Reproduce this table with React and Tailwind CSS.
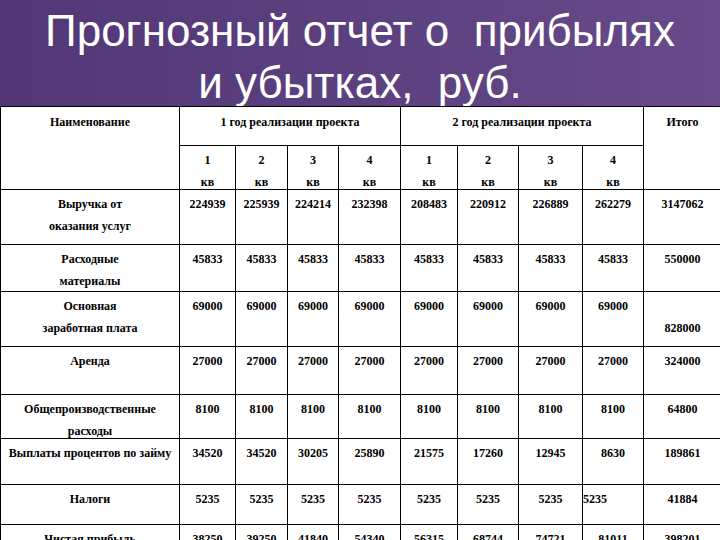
import React from "react";

const rows = [
  { label: ["Выручка от", "оказания услуг"], vals: ["224939", "225939", "224214", "232398", "208483", "220912", "226889", "262279"], total: "3147062", h: "h-[55px]" },
  { label: ["Расходные", "материалы"], vals: ["45833", "45833", "45833", "45833", "45833", "45833", "45833", "45833"], total: "550000", h: "h-[47px]" },
  { label: ["Основная", "заработная плата"], vals: ["69000", "69000", "69000", "69000", "69000", "69000", "69000", "69000"], total: "828000", totalLow: true, h: "h-[55px]" },
  { label: ["Аренда"], vals: ["27000", "27000", "27000", "27000", "27000", "27000", "27000", "27000"], total: "324000", h: "h-[48px]" },
  { label: ["Общепроизводственные", "расходы"], vals: ["8100", "8100", "8100", "8100", "8100", "8100", "8100", "8100"], total: "64800", h: "h-[44px]" },
  { label: ["Выплаты процентов по займу"], vals: ["34520", "34520", "30205", "25890", "21575", "17260", "12945", "8630"], total: "189861", h: "h-[46px]" },
  { label: ["Налоги"], vals: ["5235", "5235", "5235", "5235", "5235", "5235", "5235", "5235"], total: "41884", leftLast: true, h: "h-[40px]" },
  { label: ["Чистая прибыль"], vals: ["38250", "39250", "41840", "54340", "56315", "68744", "74721", "81011"], total: "398201", h: "h-[40px]" },
];

const cell = "border border-black align-top pt-[3px] px-0 leading-[22px] font-bold";

export default function App() {
  return (
    <div className="w-[720px] h-[540px] overflow-hidden bg-white">
      <div className="h-[106px] bg-linear-to-r from-[#523776] to-[#664a89] pt-[5px]">
        <h1 className="text-white text-center text-[44px] leading-[52px] whitespace-pre [font-family:'Liberation_Sans',Arial,sans-serif]">
          {"Прогнозный отчет о  прибылях\nи убытках,  руб."}
        </h1>
      </div>
      <div className="relative z-10 bg-white">
        <table className="table-fixed border-collapse w-[721px] text-[12px] text-black [font-family:'Liberation_Serif','Times_New_Roman',serif] text-center">
          <colgroup>
            <col className="w-[179px]" />
            <col className="w-[56px]" />
            <col className="w-[52px]" />
            <col className="w-[51px]" />
            <col className="w-[62px]" />
            <col className="w-[57px]" />
            <col className="w-[61px]" />
            <col className="w-[64px]" />
            <col className="w-[61px]" />
            <col className="w-[78px]" />
          </colgroup>
          <tbody>
            <tr className="h-[39px]">
              <td rowSpan={2} className={`${cell} pt-[4px]`}>Наименование</td>
              <td colSpan={4} className={`${cell} pt-[4px]`}>1 год реализации проекта</td>
              <td colSpan={4} className={`${cell} pt-[4px]`}>2 год реализации проекта</td>
              <td rowSpan={2} className={`${cell} pt-[4px]`}>Итого</td>
            </tr>
            <tr className="h-[44px]">
              {[1, 2, 3, 4, 1, 2, 3, 4].map((n, i) => (
                <td key={i} className={cell}>
                  <div>{n}</div>
                  <div className="h-[14px]">кв</div>
                </td>
              ))}
            </tr>
            {rows.map((r, ri) => (
              <tr key={ri} className={r.h}>
                <td className={`${cell} whitespace-nowrap`}>
                  {r.label.map((l, li) => (
                    <div key={li} className={li > 0 ? "h-[14px]" : ""}>{l}</div>
                  ))}
                </td>
                {r.vals.map((v, vi) => (
                  <td key={vi} className={`${cell} ${r.leftLast && vi === 7 ? "text-left" : ""}`}>
                    {v}
                  </td>
                ))}
                <td className={cell}>
                  {r.totalLow ? (
                    <>
                      <div>&nbsp;</div>
                      <div className="h-[14px]">{r.total}</div>
                    </>
                  ) : (
                    r.total
                  )}
                </td>
              </tr>
            ))}
          </tbody>
        </table>
      </div>
    </div>
  );
}
